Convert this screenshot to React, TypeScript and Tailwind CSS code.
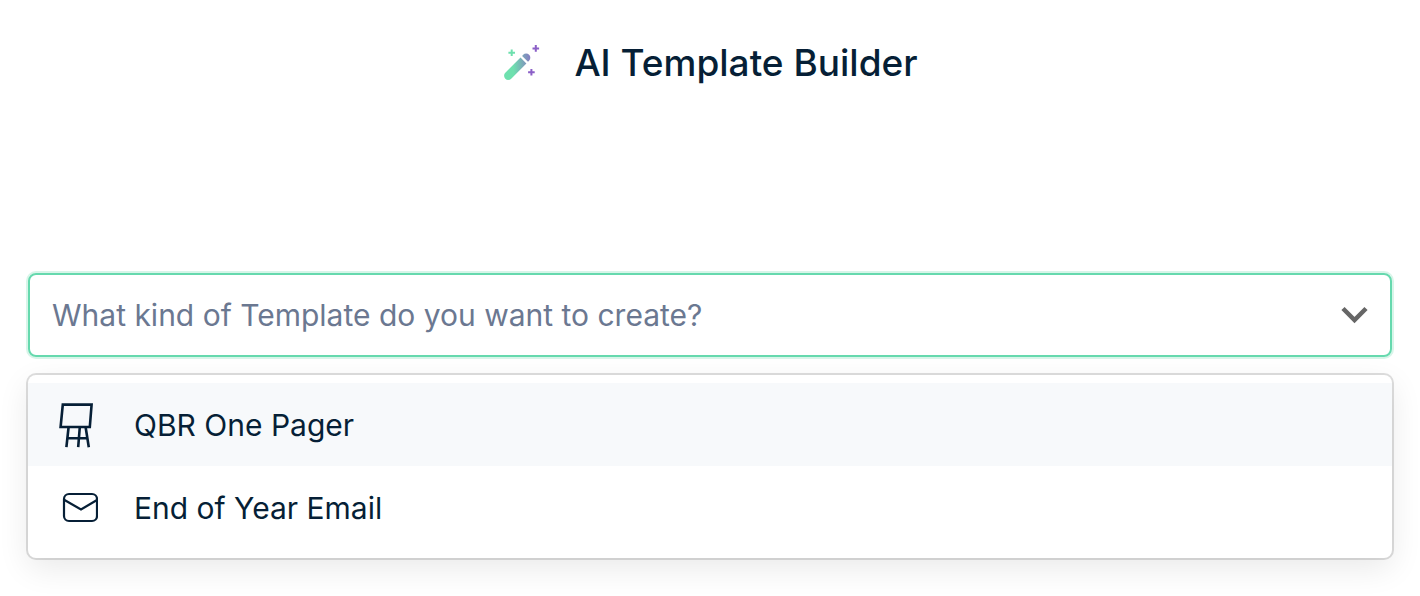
import React, { useState } from "react";

const WandIcon = () => (
  <svg className="h-10 w-10 shrink-0" viewBox="0 0 40 40" fill="url(#wand)" aria-hidden="true">
    <defs>
      <linearGradient id="wand" gradientUnits="userSpaceOnUse" x1="11" y1="22" x2="34" y2="20">
        <stop offset="0" stopColor="#6ee0ae" />
        <stop offset="1" stopColor="#8b5fc7" />
      </linearGradient>
    </defs>
    <path d="M18.5 14.5 24.4 20.4 9.2 35.7A4.1 4.1 0 0 1 3.3 29.8Z" />
    <path d="M20.1 12.9 21.2 11.8A4.1 4.1 0 0 1 27.1 17.7L26 18.8Z" />
    <path d="M9.7 6.4V13M6.4 9.7H13" stroke="#6ee0ae" strokeWidth="2" />
    <path d="M33.8 2.1V8.7M30.5 5.4H37.1" stroke="#8b5fc7" strokeWidth="2" />
    <path d="M29.4 26V32.6M26.1 29.3H32.7" stroke="#8b5fc7" strokeWidth="2" />
  </svg>
);

const EaselIcon = () => (
  <svg className="h-12 w-10 shrink-0" viewBox="0 0 40 48" fill="none" stroke="currentColor" strokeWidth="2.6" aria-hidden="true">
    <path d="M4.8 3.6H33.6L31.8 26H2.6Z" />
    <path d="M10.6 26 8.4 46.2M21.8 26 20.2 46.2M27.6 26 30.8 46.2M9.5 37.2H29.5" />
  </svg>
);

const MailIcon = () => (
  <svg className="h-12 w-10 shrink-0" viewBox="0 0 40 48" fill="none" stroke="currentColor" strokeWidth="2.2" aria-hidden="true">
    <rect x="6" y="10" width="33" height="27" rx="5" />
    <path d="M6.5 16 23 25.5 39 16" />
  </svg>
);

const options = [
  { label: "QBR One Pager", Icon: EaselIcon },
  { label: "End of Year Email", Icon: MailIcon },
];

const App = () => {
  const [value, setValue] = useState("");
  const [active, setActive] = useState(0);

  return (
    <main className="bg-white px-7 pt-[35px] pb-10 font-['Inter',sans-serif] text-[#061f36]">
      <header className="flex items-center justify-center gap-8">
        <WandIcon />
        <h1 className="text-[37px] leading-14 font-medium">AI Template Builder</h1>
      </header>

      <div className="mt-[182px] flex items-center rounded-lg border-2 border-[#66d9ae] pr-5 pl-[22px] ring-2 ring-[#d8f5e9]">
        <input
          type="text"
          role="combobox"
          aria-label="Template kind"
          aria-expanded="true"
          aria-controls="template-options"
          value={value}
          onChange={(e) => setValue(e.target.value)}
          placeholder="What kind of Template do you want to create?"
          className="h-20 min-w-0 flex-1 text-[30px] outline-none placeholder:text-[#6b7891]"
        />
        <button type="button" aria-label="Toggle options" className="text-[#666666]">
          <svg className="h-8 w-8" viewBox="0 0 32 32" fill="none" stroke="currentColor" strokeWidth="4.5" aria-hidden="true">
            <path d="M5 9.5 16.5 21 28 9.5" />
          </svg>
        </button>
      </div>

      <ul
        id="template-options"
        role="listbox"
        aria-label="Templates"
        className="mt-[18px] rounded-lg bg-white pt-2 pb-[9px] shadow-[0_0_0_2px_rgba(0,0,0,0.13),0_10px_32px_rgba(0,0,0,0.09)]"
      >
        {options.map(({ label, Icon }, i) => (
          <li
            key={label}
            role="option"
            aria-selected={i === active}
            onMouseEnter={() => setActive(i)}
            onClick={() => setValue(label)}
            className={`flex h-[83px] cursor-pointer items-center gap-9 px-[30px] text-[30px] ${i === active ? "bg-[#f7f9fb]" : ""}`}
          >
            <Icon />
            <span className="pt-0.5">{label}</span>
          </li>
        ))}
      </ul>
    </main>
  );
};

export default App;
